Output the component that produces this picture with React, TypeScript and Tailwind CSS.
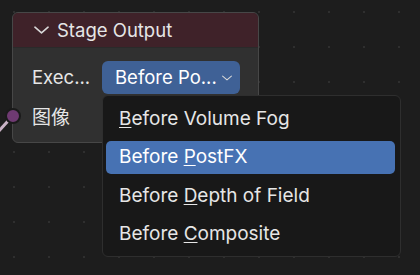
import React from "react";

const font = { fontFamily: "Inter, 'Noto Sans', 'Noto Sans CJK SC', sans-serif" };

const items = [
  { pre: "", key: "B", post: "efore Volume Fog" },
  { pre: "Before ", key: "P", post: "ostFX", active: true },
  { pre: "Before ", key: "D", post: "epth of Field" },
  { pre: "Before ", key: "C", post: "omposite" },
];

function Chevron({ className }: { className?: string }) {
  return (
    <svg className={className} viewBox="0 0 16 8" fill="none">
      <path d="M1 1 L8 7 L15 1" stroke="#d8d8d8" strokeWidth="1.7" strokeLinecap="round" strokeLinejoin="round" />
    </svg>
  );
}

export default function App() {
  return (
    <div className="relative w-[420px] h-[275px] overflow-hidden bg-[#1d1d1d] text-[#e6e6e6]" style={font}>
      {/* dot grid of the node editor */}
      <svg className="absolute inset-0" width="420" height="275">
        <defs>
          <pattern id="dots" x="13" y="11" width="35" height="35" patternUnits="userSpaceOnUse">
            <rect x="0" y="0" width="2" height="2" fill="#2f2f2f" />
          </pattern>
        </defs>
        <rect width="420" height="275" fill="url(#dots)" />
        <line x1="-2" y1="132" x2="8" y2="121" stroke="#c9b3c6" strokeWidth="3" />
      </svg>

      {/* node */}
      <div className="absolute left-[12px] top-[12px] w-[247px] h-[131px] rounded-[6px] border border-[#474747] bg-[#303030] overflow-hidden flex flex-col">
        <div className="h-[35px] shrink-0 bg-[#3f2229] flex items-center pl-[21px] gap-[8px] border-b border-[#2a2a2a]">
          <Chevron className="w-[15px] h-[8px]" />
          <span className="text-[18.5px] leading-none">Stage Output</span>
        </div>
        <div className="flex items-center pl-[19px] mt-[13px] h-[33px]">
          <span className="text-[18.5px] w-[70px]">Exec...</span>
          <div className="w-[138px] h-[33px] rounded-[6px] bg-[#3f6196] flex items-center pl-[13px] gap-[5px]">
            <span className="text-[18.5px] text-white">Before Po...</span>
            <Chevron className="w-[10px] h-[6px]" />
          </div>
        </div>
        <div className="flex items-center pl-[19px] mt-[6px] h-[33px]">
          <span className="text-[19px]" style={{ fontFamily: "'Noto Sans CJK SC', sans-serif" }}>图像</span>
        </div>
      </div>

      {/* socket */}
      <div className="absolute left-[5px] top-[108px] w-[16px] h-[16px] rounded-full bg-[#6f3a72] border-[2px] border-[#1a1a1a]" />

      {/* dropdown menu */}
      <div className="absolute left-[102px] top-[95px] w-[299px] h-[162px] rounded-[6px] border border-[#2e2e2e] bg-[#181818] pl-[3px] pr-[5px] pt-[4px] flex flex-col">
        {items.map((it, i) => (
          <div
            key={i}
            className={
              it.active
                ? "h-[33px] mt-[3px] mb-[3px] rounded-[5px] bg-[#4772b3] flex items-center pl-[13px] text-[19px] text-white"
                : "h-[38px] flex items-center pl-[13px] text-[19px]"
            }
          >
            <span>
              {it.pre}
              <span className="underline underline-offset-[2px] decoration-[1px]">{it.key}</span>
              {it.post}
            </span>
          </div>
        ))}
      </div>
    </div>
  );
}
